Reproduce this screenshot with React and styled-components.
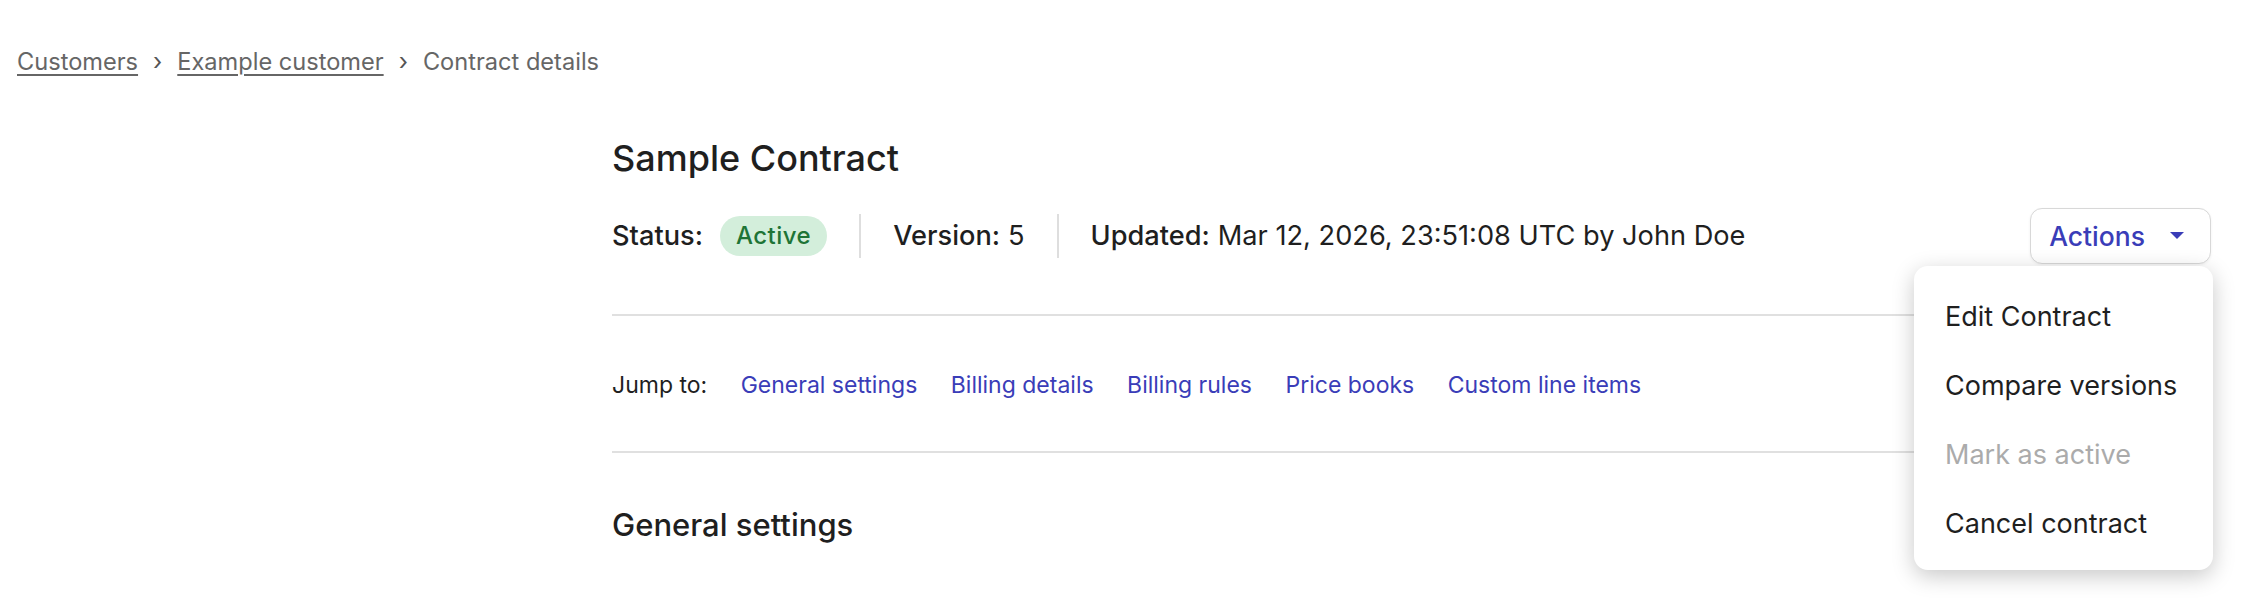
import React from "react";
import styled, { createGlobalStyle } from "styled-components";

const GlobalStyle = createGlobalStyle`
  body {
    margin: 0;
    background: #ffffff;
    font-family: Inter, "Noto Sans", sans-serif;
    color: #1f1f1f;
  }
`;

const Page = styled.div`
  width: 2260px;
  height: 602px;
  overflow: hidden;
  padding: 44px 49px 0 17px;
  box-sizing: border-box;
`;

const Breadcrumbs = styled.nav`
  display: flex;
  align-items: center;
  gap: 15px;
  font-size: 23.6px;
  line-height: 36px;
  color: #666666;
`;

const Crumb = styled.a`
  color: #666666;
  text-decoration: underline;
  text-underline-offset: 4px;
  text-decoration-thickness: 1.5px;
`;

const Chevron = styled.span`
  color: #555555;
  font-size: 24px;
`;

const Main = styled.main`
  margin: 54px 0 0 595px;
`;

const Title = styled.h1`
  margin: 0;
  font-size: 36px;
  line-height: 48px;
  font-weight: 500;
  color: #1f1f1f;
`;

const MetaRow = styled.div`
  display: flex;
  align-items: center;
  height: 56px;
  margin-top: 26px;
`;

const MetaItem = styled.div`
  display: flex;
  align-items: center;
  gap: 17px;
  font-size: 27.2px;
  line-height: 36px;
  padding: 0 32px;
  border-left: ${(p) => (p.first ? "none" : "2px solid #dedede")};
  height: 44px;
  &:first-child {
    padding-left: 0;
  }
`;

const Label = styled.span`
  font-weight: 500;
`;

const Value = styled.span`
  font-weight: 400;
  margin-left: -9px;
`;

const Badge = styled.span`
  display: inline-flex;
  align-items: center;
  height: 40px;
  padding: 0 16px;
  border-radius: 20px;
  background: #d3eedb;
  color: #1e7436;
  font-size: 24px;
  font-weight: 500;
  letter-spacing: 0.5px;
`;

const ActionsWrap = styled.div`
  position: relative;
  margin-left: auto;
`;

const ActionsButton = styled.button`
  display: flex;
  align-items: center;
  gap: 25px;
  height: 56px;
  padding: 0 26px 0 18px;
  border: 1.5px solid #d8d8d8;
  border-radius: 12px;
  background: #ffffff;
  box-shadow: 0 1px 3px rgba(0, 0, 0, 0.06);
  color: #3a3db8;
  font-family: Inter, sans-serif;
  font-size: 26.5px;
  font-weight: 500;
`;

const Menu = styled.ul`
  position: absolute;
  top: 58px;
  right: -2px;
  width: 299px;
  margin: 0;
  padding: 16px 0 12px;
  list-style: none;
  background: #ffffff;
  border-radius: 14px;
  box-shadow: 0 6px 22px rgba(0, 0, 0, 0.22);
  z-index: 2;
`;

const MenuItem = styled.li`
  height: 69px;
  display: flex;
  align-items: center;
  padding-left: 31px;
  font-size: 27px;
  color: ${(p) => (p.disabled ? "#ababab" : "#1f1f1f")};
`;

const Divider = styled.hr`
  margin: ${(p) => p.gap || "50px 0 0"};
  border: none;
  height: 2px;
  background: #e0e0e0;
`;

const JumpRow = styled.div`
  display: flex;
  align-items: center;
  gap: 33.5px;
  margin-top: 51px;
  font-size: 23px;
  line-height: 36px;
`;

const JumpLabel = styled.span`
  color: #1f1f1f;
`;

const JumpLink = styled.a`
  color: #3a3db8;
  text-decoration: none;
`;

const SectionTitle = styled.h2`
  margin: 50px 0 0;
  font-size: 31px;
  line-height: 44px;
  font-weight: 500;
  color: #1f1f1f;
`;

const Caret = () => (
  <svg width="14" height="8" viewBox="0 0 14 8">
    <path d="M0 0 L14 0 L7 7 Z" fill="#3a3db8" />
  </svg>
);

const links = [
  "General settings",
  "Billing details",
  "Billing rules",
  "Price books",
  "Custom line items",
];

const menuItems = [
  { label: "Edit Contract" },
  { label: "Compare versions" },
  { label: "Mark as active", disabled: true },
  { label: "Cancel contract" },
];

export default function App() {
  return (
    <Page>
      <GlobalStyle />
      <Breadcrumbs>
        <Crumb href="#">Customers</Crumb>
        <Chevron>›</Chevron>
        <Crumb href="#">Example customer</Crumb>
        <Chevron>›</Chevron>
        <span>Contract details</span>
      </Breadcrumbs>

      <Main>
        <Title>Sample Contract</Title>
        <MetaRow>
          <MetaItem first>
            <Label>Status:</Label>
            <Badge>Active</Badge>
          </MetaItem>
          <MetaItem>
            <Label>Version:</Label>
            <Value>5</Value>
          </MetaItem>
          <MetaItem>
            <Label>Updated:</Label>
            <Value>Mar 12, 2026, 23:51:08 UTC by John Doe</Value>
          </MetaItem>
          <ActionsWrap>
            <ActionsButton>
              Actions
              <Caret />
            </ActionsButton>
            <Menu>
              {menuItems.map((m) => (
                <MenuItem key={m.label} disabled={m.disabled}>
                  {m.label}
                </MenuItem>
              ))}
            </Menu>
          </ActionsWrap>
        </MetaRow>

        <Divider />

        <JumpRow>
          <JumpLabel>Jump to:</JumpLabel>
          {links.map((l) => (
            <JumpLink key={l} href="#">
              {l}
            </JumpLink>
          ))}
        </JumpRow>

        <Divider gap="48px 0 0" />

        <SectionTitle>General settings</SectionTitle>
      </Main>
    </Page>
  );
}
